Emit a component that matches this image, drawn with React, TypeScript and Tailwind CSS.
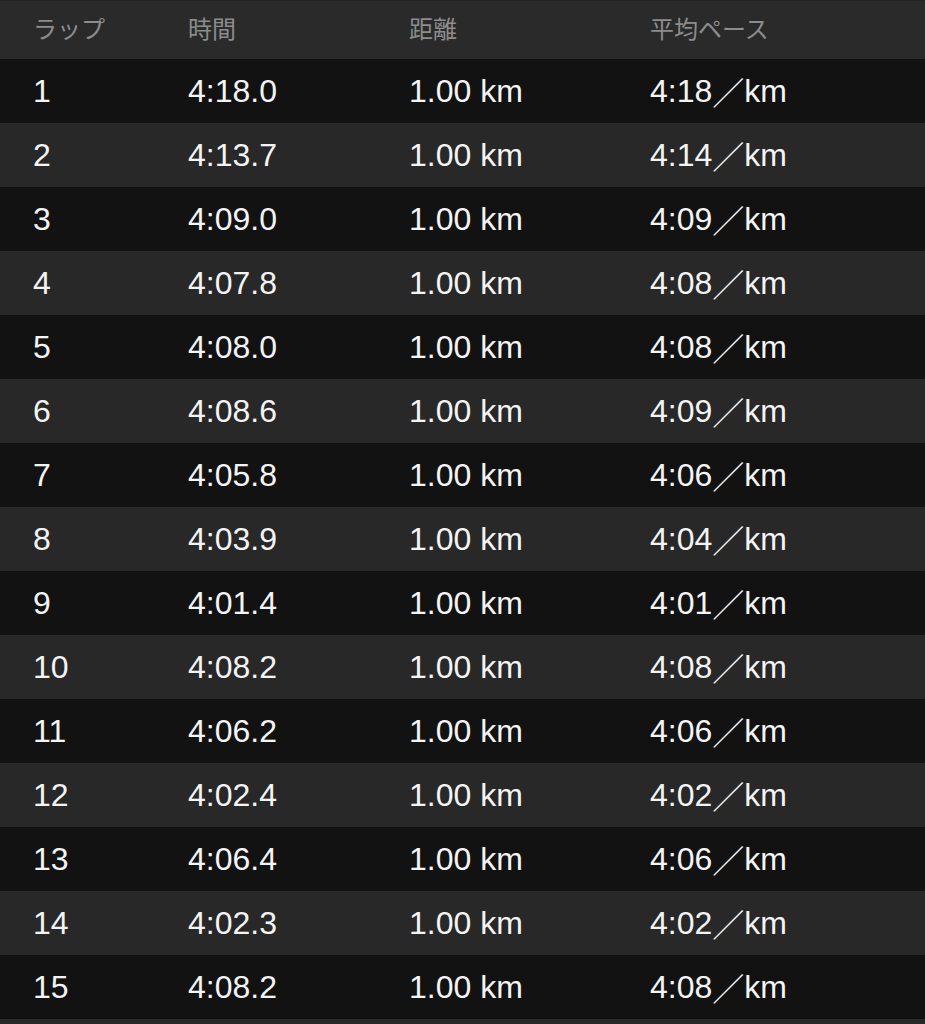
import React from "react";

const laps: [string, string, string][] = [
  ["1", "4:18.0", "4:18"],
  ["2", "4:13.7", "4:14"],
  ["3", "4:09.0", "4:09"],
  ["4", "4:07.8", "4:08"],
  ["5", "4:08.0", "4:08"],
  ["6", "4:08.6", "4:09"],
  ["7", "4:05.8", "4:06"],
  ["8", "4:03.9", "4:04"],
  ["9", "4:01.4", "4:01"],
  ["10", "4:08.2", "4:08"],
  ["11", "4:06.2", "4:06"],
  ["12", "4:02.4", "4:02"],
  ["13", "4:06.4", "4:06"],
  ["14", "4:02.3", "4:02"],
  ["15", "4:08.2", "4:08"],
];

const font = {
  fontFamily: '"Liberation Sans", "Noto Sans CJK JP", sans-serif',
};

export default function App() {
  return (
    <div
      className="w-[925px] h-[1024px] bg-[#292929] overflow-hidden"
      style={font}
    >
      <div className="h-[59px] border-t border-[#212121] bg-[#2a2a2a] grid grid-cols-[155px_221px_241px_1fr] items-center pl-[33px] text-[24px] text-[#8c8c8c] [font-family:'Noto_Sans_CJK_JP',sans-serif] pb-[5px]">
        <div>ラップ</div>
        <div>時間</div>
        <div>距離</div>
        <div>平均ペース</div>
      </div>
      {laps.map(([n, t, p], i) => (
        <div
          key={n}
          className={`h-[64px] grid grid-cols-[155px_221px_241px_1fr] items-center pl-[33px] text-[32px] text-[#f4f4f4] ${
            i % 2 === 0 ? "bg-[#121212]" : "bg-[#282828]"
          }`}
        >
          <div>{n}</div>
          <div>{t}</div>
          <div>1.00 km</div>
          <div className="flex items-center">
            <span>{p}</span>
            <span className="[font-family:'Noto_Sans_CJK_JP',sans-serif] text-[32px] leading-none">／</span>
            <span>km</span>
          </div>
        </div>
      ))}
    </div>
  );
}
